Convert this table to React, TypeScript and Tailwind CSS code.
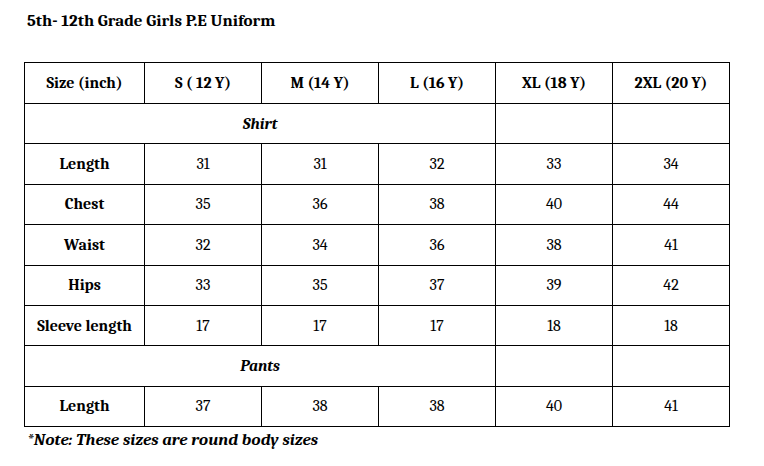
import React from 'react'

const sizes = ['S ( 12 Y)', 'M (14 Y)', 'L (16 Y)', 'XL (18 Y)', '2XL (20 Y)']

const shirt: { label: string; values: number[] }[] = [
  { label: 'Length', values: [31, 31, 32, 33, 34] },
  { label: 'Chest', values: [35, 36, 38, 40, 44] },
  { label: 'Waist', values: [32, 34, 36, 38, 41] },
  { label: 'Hips', values: [33, 35, 37, 39, 42] },
  { label: 'Sleeve length', values: [17, 17, 17, 18, 18] },
]

const pants = [{ label: 'Length', values: [37, 38, 38, 40, 41] }]

const cell = 'font-serif font-[Liberation_Serif] border-[1.5px] border-black text-center align-middle p-0'

function DataRows({ rows }: { rows: { label: string; values: number[] }[] }) {
  return (
    <>
      {rows.map((row) => (
        <tr key={row.label} className="h-[40.4px]">
          <td className={`${cell} font-bold`}>{row.label}</td>
          {row.values.map((v, i) => (
            <td key={i} className={cell}>{v}</td>
          ))}
        </tr>
      ))}
    </>
  )
}

function SectionRow({ title }: { title: string }) {
  return (
    <tr className="h-[40.4px]">
      <td colSpan={4} className={`${cell} font-bold italic`}>{title}</td>
      <td className={cell}></td>
      <td className={cell}></td>
    </tr>
  )
}

export default function App() {
  return (
    <div className="font-serif font-[Liberation_Serif] w-[764px] h-[466px] bg-white text-black text-[16px] leading-tight pl-[24px] pt-[10px]">
      <h1 className="font-serif font-[Liberation_Serif] font-bold text-[17px] pl-[3px] h-[52px]">5th- 12th Grade Girls P.E Uniform</h1>

      <table className="font-serif font-[Liberation_Serif] border-collapse table-fixed w-[705px]">
        <colgroup>
          <col className="w-[120px]" />
          {sizes.map((s) => (
            <col key={s} className="w-[117px]" />
          ))}
        </colgroup>
        <tbody>
          <tr className="h-[41px]">
            <td className={`${cell} font-bold`}>Size (inch)</td>
            {sizes.map((s) => (
              <td key={s} className={`${cell} font-bold`}>{s}</td>
            ))}
          </tr>
          <SectionRow title="Shirt" />
          <DataRows rows={shirt} />
          <SectionRow title="Pants" />
          <DataRows rows={pants} />
        </tbody>
      </table>

      <p className="font-serif font-[Liberation_Serif] font-bold italic text-[17px] pl-[3px] pt-[2px]">*Note: These sizes are round body sizes</p>
    </div>
  )
}
